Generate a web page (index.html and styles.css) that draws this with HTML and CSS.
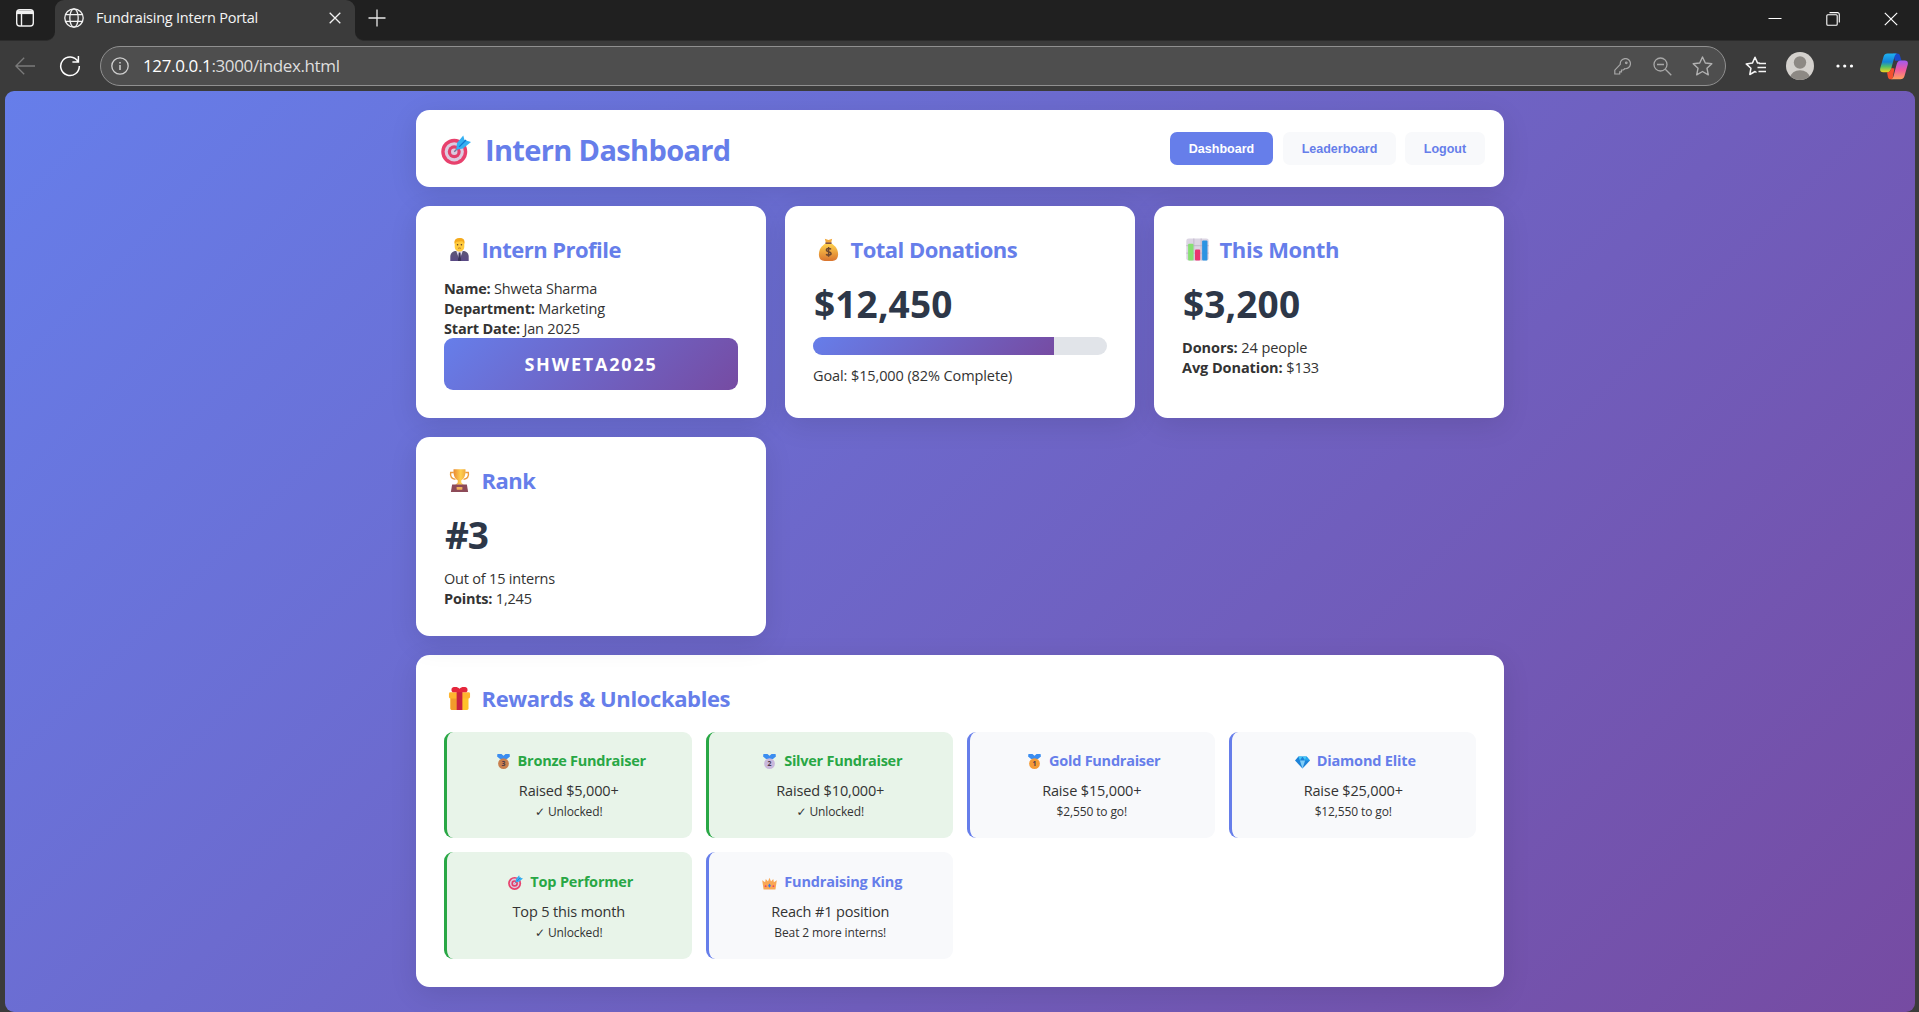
FILE: index.html
```html
<!DOCTYPE html>
<html lang="en">
<head>
<meta charset="utf-8">
<title>Fundraising Intern Portal</title>
<link rel="stylesheet" href="styles.css">
</head>
<body>
<svg class="defs" aria-hidden="true">
  <defs>
    <linearGradient id="gold" x1="0" y1="0" x2="0" y2="1"><stop offset="0" stop-color="#ffd24d"/><stop offset="1" stop-color="#d9742f"/></linearGradient>
    <linearGradient id="cup" x1="0" y1="0" x2="1" y2="0"><stop offset="0" stop-color="#e98a33"/><stop offset=".6" stop-color="#ffcf4f"/><stop offset="1" stop-color="#f0a93c"/></linearGradient>
    <linearGradient id="suit" x1="0" y1="0" x2="0" y2="1"><stop offset="0" stop-color="#5d5775"/><stop offset="1" stop-color="#5a4a86"/></linearGradient>
    <linearGradient id="cpl" x1="0" y1="0" x2="0" y2="1"><stop offset="0" stop-color="#1fb2f0"/><stop offset=".45" stop-color="#1482d8"/><stop offset=".7" stop-color="#4fbf6a"/><stop offset="1" stop-color="#f2d51c"/></linearGradient>
    <linearGradient id="cpr" x1="0" y1="0" x2="0" y2="1"><stop offset="0" stop-color="#a05bf0"/><stop offset=".5" stop-color="#f0589f"/><stop offset="1" stop-color="#ffa25c"/></linearGradient>
  </defs>
  <symbol id="target" viewBox="0 0 24 24">
    <circle cx="10.6" cy="13.4" r="10.4" fill="#e8416d"/><circle cx="10.6" cy="13.4" r="7.7" fill="#dccbe0"/><circle cx="10.6" cy="13.4" r="5.2" fill="#e2406c"/><circle cx="10.6" cy="13.4" r="2.6" fill="#dccbe0"/>
    <path d="M10.6 13.4 17 7" stroke="#6b7f9e" stroke-width="1.2"/>
    <path d="M12.2 11.7 12.8 6.3 17.8.4 18.8 4 24 5.6 17.6 10.8Z" fill="#35b0f2"/><path d="M14.5 9.5 20 4" stroke="#1677cf" stroke-width="1.1"/>
  </symbol>
  <symbol id="worker" viewBox="0 0 24 24">
    <path d="M2.4 24v-4.5c0-4 3-6 6-6h7.2c3.2 0 6 2 6 6V24Z" fill="url(#suit)"/><path d="M8.5 13.3h7L12 23Z" fill="#e6e1f0"/><path d="M11.2 15h1.8l.7 9h-3.3Z" fill="#3b3358"/>
    <path d="M7 4.7C7 1.5 9 .3 12 .3s5 1.2 5 4.4v4.5c0 3-2.2 5-5 5s-5-2-5-5Z" fill="#ffcb3d"/><path d="M6.8 6V3.5C7.3.8 9.5 0 12.5 0s4.8 1.6 4.7 4L17 6l-2-2.6-6 .4Z" fill="#f4a91c"/>
    <circle cx="10" cy="7" r=".8" fill="#5b3d2c"/><circle cx="14" cy="7" r=".8" fill="#5b3d2c"/><path d="M10.5 10.8q1.5-.8 3 0" stroke="#a5602b" stroke-width=".8" fill="none"/>
  </symbol>
  <symbol id="money" viewBox="0 0 24 24">
    <path d="M8.2.8 12 2 15.8.8 14.8 5H9.2Z" fill="#f2a83b"/><path d="M9 5.8h6C19 8 22 12 22 17c0 5-3 7-6 7H8c-3.500 0-6-2-6-7 0-5 3-9 7-11.200Z" fill="url(#gold)"/><path d="M8.8 4.600h6.400v1.600H8.800Z" fill="#7a4a3d"/>
    <path d="M14.600 11.800c-.6-.9-4.800-1.500-4.900.8 0 2.300 5 1.300 5 3.700 0 2.200-4.200 1.900-5.200.6M12.100 9.300v10.200" stroke="#6b4630" stroke-width="1.500" fill="none"/>
  </symbol>
  <symbol id="chart" viewBox="0 0 24 24">
    <rect x=".3" y=".5" width="23.400" height="23" rx="2.500" fill="#dcd5e3"/><path d="M8.200.5v23M15.800.5v23M.3 8h23.400M.3 15.800h23.400" stroke="#bbb1c6" stroke-width=".8"/>
    <rect x="2.200" y="6" width="5.600" height="17.500" rx="1" fill="#86e072"/><rect x="9.400" y="12" width="5.400" height="11.500" rx="1" fill="#ea3370"/><rect x="16.800" y="2.600" width="5.600" height="20.900" rx="1" fill="#2b93e2"/>
  </symbol>
  <symbol id="trophy" viewBox="0 0 24 24">
    <path d="M6 3.600H2.800c-1 5 1.500 6.600 5 7.200M18 3.600h3.200c1 5-1.500 6.600-5 7.200" stroke="#eb9a3c" stroke-width="1.500" fill="none"/>
    <path d="M5.800.3h12.400c.5 6-1.300 10-4.500 11.700l.3 2.700 2.500 1.800h-9l2.500-1.800.3-2.700C7.100 10.300 5.300 6.300 5.800.3Z" fill="url(#cup)"/>
    <path d="M4.300 16.300h15.400L21 24H3Z" fill="#8d4a58"/><rect x="9" y="18.800" width="6" height="2.800" rx=".5" fill="#f2b15a"/>
  </symbol>
  <symbol id="gift" viewBox="0 0 24 24">
    <rect x="2.600" y="9" width="18.800" height="15" rx="1.500" fill="#ffc229"/><path d="M2.600 9H9v15H4a1.500 1.500 0 0 1-1.400-1.500Z" fill="#f29b2c"/><rect x="1" y="5.500" width="22" height="6.500" rx="1.500" fill="#ffb52e"/>
    <rect x="9" y="4" width="6" height="20" fill="#c9213f"/><path d="M3.600 2.800C3.600.6 5.500 0 7.500 0 9.500 0 11 .6 12 1.800 13 .6 14.500 0 16.500 0s3.900.6 3.900 2.800c0 1.800-.9 2.700-2.400 2.700H6c-1.500 0-2.400-.9-2.400-2.700Z" fill="#e5263c"/>
  </symbol>
  <symbol id="medal" viewBox="0 0 24 24">
    <path d="M2.300 0h6.500L12 2.600 15.200 0h6.500l.6 3.800L17.500 8h-11L1.700 3.800Z" fill="#3b8df0"/><circle cx="12" cy="15.400" r="8.600" fill="currentColor"/>
  </symbol>
  <symbol id="diamond" viewBox="0 0 24 24">
    <path d="M5.500 4h13L24 10.500 12 23 0 10.500Z" fill="#1d83d8"/><path d="m5.500 4 2.300 6.500L12 4l4.200 6.500L18.500 4Z" fill="#45c8f8"/><path d="M7.800 10.500h8.400L12 23Z" fill="#7fcdf8"/><path d="M18.500 4 24 10.500h-7.800Z" fill="#25a7ee"/>
  </symbol>
  <symbol id="crown" viewBox="0 0 24 24">
    <path d="M2.500 23 .3 8.300 5 11.500 6 6.500l3.600 3.700L12 4.300l2.400 5.900L18 6.500l1 5 4.700-3.200L21.500 23Z" fill="#f9a754"/><path d="m12 13.500 2.200 3.500-2.200 3.500L9.800 17Z" fill="#3477ee"/><circle cx="5.800" cy="17.800" r="1.500" fill="#eb3f68"/><circle cx="18.200" cy="17.800" r="1.500" fill="#eb3f68"/>
  </symbol>
</svg>

<div class="browser">
  <div class="tabstrip">
    <div class="strip-left">
      <svg width="20" height="20" viewBox="0 0 20 20" fill="none" stroke="#f0f0f0" stroke-width="1.400"><rect x="1.700" y="1.700" width="16.600" height="16.300" rx="3"/><path d="M6.500 6v12"/><path d="M2 2.500h16v3.600H2Z" fill="#f0f0f0" stroke="none"/></svg>
    </div>
    <div class="tab">
      <svg width="20" height="20" viewBox="0 0 20 20" fill="none" stroke="#f2f2f2" stroke-width="1.300"><circle cx="10" cy="10" r="9.200"/><ellipse cx="10" cy="10" rx="4.200" ry="9.200"/><path d="M1.500 6.700h17M1.500 13.300h17"/></svg>
      <span class="tab-title">Fundraising Intern Portal</span>
      <svg width="12" height="12" viewBox="0 0 12 12" stroke="#f2f2f2" stroke-width="1.300"><path d="m.7.700 10.600 10.600M11.300.7.7 11.300"/></svg>
    </div>
    <div class="strip-right">
      <svg width="18" height="18" viewBox="0 0 18 18" stroke="#e8e8e8" stroke-width="1.300"><path d="M9 .5v17M.5 9h17"/></svg>
      <div class="window-buttons">
        <svg width="14" height="14" viewBox="0 0 14 14" stroke="#fff" stroke-width="1"><path d="M.5 6.500h13"/></svg>
        <svg width="14" height="14" viewBox="0 0 14 14" stroke="#fff" stroke-width="1.100" fill="none"><rect x=".8" y="2.800" width="10.400" height="10.400" rx="1"/><path d="M3.500.6h8a1.800 1.800 0 0 1 1.800 1.800v8"/></svg>
        <svg width="14" height="14" viewBox="0 0 14 14" stroke="#fff" stroke-width="1.200"><path d="m.8.800 12.400 12.400M13.200.8.800 13.200"/></svg>
      </div>
    </div>
  </div>
  <div class="toolbar">
    <svg class="back" width="20" height="18" viewBox="0 0 20 18" fill="none" stroke="#7b7b7b" stroke-width="1.300"><path d="M20 9H1M9.200.7.900 9l8.300 8.300"/></svg>
    <svg class="reload" width="22" height="22" viewBox="0 0 22 22" fill="none" stroke="#fff" stroke-width="1.500"><path d="M19 6.500A9.300 9.300 0 1 0 20.300 11M19.400 1v6h-6"/></svg>
    <div class="address">
      <svg width="18" height="18" viewBox="0 0 18 18" fill="none" stroke="#d0d0d0" stroke-width="1.300"><circle cx="9" cy="9" r="8.200"/><path d="M9 8v5M9 5v1.500" stroke-width="1.500"/></svg>
      <span class="url">127.0.0.1<span class="url-path">:3000/index.html</span></span>
      <svg class="key" width="17" height="17" viewBox="0 0 17 17" fill="none" stroke="#a8a8a8" stroke-width="1.200"><path d="M6.300 6.300A5.100 5.100 0 1 1 10.800 10.700L9.300 12H7.500v1.800H5.700V16H.8v-3.800Z"/><circle cx="12.300" cy="4.800" r=".8"/></svg>
      <svg class="zoom" width="19" height="19" viewBox="0 0 19 19" fill="none" stroke="#a8a8a8" stroke-width="1.300"><circle cx="7.500" cy="7.500" r="6.500"/><path d="m12.300 12.300 6 6M4 7.500h7"/></svg>
      <svg class="star" width="21" height="20" viewBox="0 0 21 20" fill="none" stroke="#b0b0b0" stroke-width="1.400" stroke-linejoin="round"><path d="m10.500 1 2.800 6 6.500.800-4.800 4.500 1.300 6.500-5.800-3.300-5.800 3.300L6 12.300 1.200 7.800 7.700 7Z"/></svg>
    </div>
    <svg class="favs" width="21" height="20" viewBox="0 0 21 20" fill="none" stroke="#f5f5f5" stroke-width="1.500" stroke-linejoin="round"><path d="M11.500 16.500 10 15.500l-5.200 3 1.100-6.200L1.200 7.900l6.200-.8L10 1.300l2.600 5.800h2.200M14 7.600h7M12.500 11.500H21M13.500 15.400H21"/></svg>
    <svg class="avatar" width="28" height="28" viewBox="0 0 28 28"><clipPath id="av"><circle cx="14" cy="14" r="14"/></clipPath><g clip-path="url(#av)"><rect width="28" height="28" fill="#d4d1cd"/><circle cx="14" cy="10.500" r="6.200" fill="#8d8984"/><ellipse cx="14" cy="25.500" rx="9.500" ry="7.300" fill="#8d8984"/></g></svg>
    <svg class="dots" width="18" height="6" viewBox="0 0 18 6" fill="#fff"><circle cx="2" cy="3" r="1.600"/><circle cx="8.700" cy="3" r="1.600"/><circle cx="15.500" cy="3" r="1.600"/></svg>
    <svg class="copilot" width="28" height="27" viewBox="0 0 28 27">
      <path d="M13 .5h4.300c1.500 0 2.300.9 2.700 2.200l1.500 5h-6.500Z" fill="#1b49c9"/>
      <path d="M7.500.5h9.300c-1.500.7-2 2-2.500 3.800L11.400 15c-.7 2.700-1.800 4.200-4.400 4.200H3.200C.5 19.200-.3 17.500.3 15L3.500 3.700C4.200 1.500 5.500.5 7.500.5Z" fill="url(#cpl)"/>
      <path d="M7 19.200c2.600 0 3.700-1.500 4.400-4.200l3 .5-1.900 10.800h-1.900c-1.500 0-2.300-.9-2.700-2.300Z" fill="#f4502e"/>
      <path d="M20.500 26.300h-9.300c1.500-.7 2-2 2.500-3.800l2.900-10.900c.7-2.700 1.800-4.100 4.400-4.100h3.800c2.700 0 3.500 1.700 2.900 4.200L24.500 23c-.7 2.300-2 3.300-4 3.300Z" fill="url(#cpr)"/>
    </svg>
  </div>
  <main class="page">
    <div class="container">
      <header class="header">
        <h1><svg class="h1-icon"><use href="#target"/></svg>Intern Dashboard</h1>
        <nav>
          <button class="nav-btn active dash">Dashboard</button>
          <button class="nav-btn lead">Leaderboard</button>
          <button class="nav-btn out">Logout</button>
        </nav>
      </header>
      <section class="grid">
        <article class="card">
          <h2><svg><use href="#worker"/></svg><span class="tight">Intern Profile</span></h2>
          <div class="lines">
            <p><b>Name:</b> Shweta Sharma</p>
            <p><b>Department:</b> Marketing</p>
            <p><b>Start Date:</b> Jan 2025</p>
          </div>
          <div class="code">SHWETA2025</div>
        </article>
        <article class="card">
          <h2><svg><use href="#money"/></svg><span class="tight">Total Donations</span></h2>
          <div class="stat">$12,450</div>
          <div class="bar"><div class="fill" style="width:82%"></div></div>
          <p class="goal">Goal: $15,000 (82% Complete)</p>
        </article>
        <article class="card">
          <h2><svg><use href="#chart"/></svg>This Month</h2>
          <div class="stat">$3,200</div>
          <div class="lines loose">
            <p><b>Donors:</b> 24 people</p>
            <p><b>Avg Donation:</b> $133</p>
          </div>
        </article>
        <article class="card">
          <h2><svg><use href="#trophy"/></svg><span class="tight">Rank</span></h2>
          <div class="stat rank">#3</div>
          <div class="lines">
            <p>Out of 15 interns</p>
            <p><b>Points:</b> 1,245</p>
          </div>
        </article>
      </section>
      <section class="card rewards">
        <h2><svg><use href="#gift"/></svg>Rewards &amp; Unlockables</h2>
        <div class="reward-grid">
          <div class="reward unlocked">
            <h3><svg class="bronze" viewBox="0 0 24 24"><use href="#medal"/><text x="12" y="19.500">3</text></svg><span class="tight3">Bronze Fundraiser</span></h3>
            <p>Raised $5,000+</p><small><i class="tick">✓</i> Unlocked!</small>
          </div>
          <div class="reward unlocked">
            <h3><svg class="silver" viewBox="0 0 24 24"><use href="#medal"/><text x="12" y="19.500">2</text></svg><span class="tight3">Silver Fundraiser</span></h3>
            <p>Raised $10,000+</p><small><i class="tick">✓</i> Unlocked!</small>
          </div>
          <div class="reward">
            <h3><svg class="gold" viewBox="0 0 24 24"><use href="#medal"/><text x="12" y="19.500">1</text></svg><span class="tight3">Gold Fundraiser</span></h3>
            <p>Raise $15,000+</p><small>$2,550 to go!</small>
          </div>
          <div class="reward">
            <h3><svg><use href="#diamond"/></svg>Diamond Elite</h3>
            <p>Raise $25,000+</p><small>$12,550 to go!</small>
          </div>
          <div class="reward unlocked">
            <h3><svg><use href="#target"/></svg>Top Performer</h3>
            <p>Top 5 this month</p><small><i class="tick">✓</i> Unlocked!</small>
          </div>
          <div class="reward">
            <h3><svg><use href="#crown"/></svg>Fundraising King</h3>
            <p>Reach #1 position</p><small>Beat 2 more interns!</small>
          </div>
        </div>
      </section>
    </div>
  </main>
</div>
</body>
</html>
```
FILE: styles.css
```css
* { box-sizing: border-box; margin: 0; padding: 0; }
body { font-family: "Open Sans", "Noto Sans", sans-serif; font-size: 14.5px; color: #333; background: #3b3b3b; overflow: hidden; }
svg { display: block; flex: none; }
.defs { position: absolute; width: 0; height: 0; }

.browser { display: flex; flex-direction: column; height: 1012px; }
.tabstrip { display: flex; height: 41px; background: linear-gradient(#202020 14px, #3b3b3b 14px); }
.strip-left { width: 55px; padding: 8px 0 0 15px; background: #202020; border-radius: 0 0 9px 0; border-bottom: 1px solid #2c2c2c; }
.tab { width: 300px; padding: 0 14px 5px 9px; display: flex; align-items: center; background: #3b3b3b; border-radius: 9px 9px 0 0; }
.tab-title { flex: 1; margin-left: 12px; color: #f5f5f5; letter-spacing: -0.24px; line-height: 20px; padding-bottom: 1px; }
.strip-right { flex: 1; display: flex; align-items: center; justify-content: space-between; padding: 0 21px 5px 13px; background: #202020; border-radius: 0 0 0 9px; border-bottom: 1px solid #2c2c2c; }
.window-buttons { display: flex; gap: 44px; padding-top: 3px; }

.toolbar { height: 50px; display: flex; align-items: center; padding: 0 11px 0 15px; }
.reload { margin-left: 24px; }
.address { flex: 1; height: 40px; margin: 0 19px 0 19px; padding: 0 12px 0 10px; display: flex; align-items: center; background: #4e4e4e; border: 1px solid #909090; border-radius: 20px; }
.url { flex: 1; margin-left: 14px; font-size: 17px; letter-spacing: -0.37px; color: #fff; line-height: 24px; }
.url-path { color: #dedede; }
.zoom { margin-left: 22px; }
.star { margin-left: 20px; }
.avatar { margin-left: 20px; }
.dots { margin-left: 22px; }
.copilot { margin-left: 26px; }

.page { flex: 1; margin: 0 4px 0 5px; padding-top: 19px; border-radius: 9px; background: linear-gradient(135deg, #667eea 0%, #764ba2 100%); }
.container { width: 1088px; margin: 0 auto; }
.header, .card { background: #fff; border-radius: 13.5px; box-shadow: 0 7px 28px rgba(0, 0, 0, 0.1); }
.header { height: 77px; display: flex; align-items: center; justify-content: space-between; padding: 0 19px 0 24px; margin-bottom: 19px; }
h1 { display: flex; align-items: center; font-size: 29px; line-height: 40px; letter-spacing: -0.65px; color: #667eea; padding-top: 3px; }
.h1-icon { width: 30px; height: 30px; margin: 0 14px 0 1px; }
nav { display: flex; gap: 9px; }
.nav-btn { height: 33px; border: 0; border-radius: 7px; background: #f8f9fb; color: #667eea; font: 700 12.5px/33px "Liberation Sans", Arial, sans-serif; padding-top: 1px; }
.nav-btn.active { background: #667eea; color: #fff; }
.dash { width: 103px; margin-right: 1px; }
.lead { width: 113px; }
.out { width: 80px; }

.grid { display: grid; grid-template-columns: repeat(3, 350px); gap: 19px; }
.card { padding: 28px; }
h2 { display: flex; align-items: center; font-size: 22px; line-height: 30px; letter-spacing: -0.38px; color: #667eea; margin-bottom: 14px; }
h2 svg { width: 23px; height: 23px; margin: 1px 10.5px 0 4px; }
.tight { letter-spacing: -0.53px; }
p { line-height: 20px; letter-spacing: -0.2px; }
.lines { padding-top: 1px; margin-bottom: -1px; }
.loose p { letter-spacing: -0.08px; }
.code { height: 52px; border-radius: 9px; background: linear-gradient(135deg, #667eea, #764ba2); color: #fff; font-size: 18px; font-weight: 700; line-height: 52px; letter-spacing: 1.8px; text-align: center; }
.stat { font-size: 37px; font-weight: 700; line-height: 50px; letter-spacing: 0.15px; color: #2d3748; padding: 1px 0 0 1px; margin-bottom: 8px; }
.stat.rank { letter-spacing: -1.2px; }
.bar { height: 18px; border-radius: 9px; overflow: hidden; background: #e1e4e9; margin-bottom: 11px; }
.goal { letter-spacing: -0.1px; }
.fill { height: 100%; background: linear-gradient(135deg, #667eea, #764ba2); }

.rewards { height: 332px; margin-top: 19px; }
.rewards h2 { margin-bottom: 19px; }
.reward-grid { display: grid; grid-template-columns: repeat(4, 1fr); grid-template-rows: 106px 107px; gap: 14px; }
.reward { padding-top: 19px; border-left: 3px solid #667eea; border-radius: 9px; background: #f8f9fb; text-align: center; }
.reward.unlocked { border-color: #28a745; background: #e8f4e9; }
.reward:nth-child(n+5) { padding-top: 20px; }
.reward h3 { display: flex; justify-content: center; align-items: center; font-size: 14.5px; line-height: 20px; letter-spacing: -0.18px; color: #667eea; margin-bottom: 10px; }
.reward.unlocked h3 { color: #28a745; }
.reward h3 svg { width: 15px; height: 15px; margin: 0 7px 0 3px; }
.reward h3 text { font-size: 11px; font-weight: 700; text-anchor: middle; fill: #4a3a4a; letter-spacing: 0; }
.reward p { letter-spacing: -0.15px; margin-left: -1px; }
.tight3 { letter-spacing: -0.25px; }
.bronze { color: #c87f4e; }
.silver { color: #c9b8dc; }
.gold { color: #f59b36; }
small { display: block; font-size: 12px; line-height: 22px; letter-spacing: -0.12px; margin-left: -1px; }
.tick { font-style: normal; font-family: "DejaVu Sans", sans-serif; font-size: 12px; }
```
